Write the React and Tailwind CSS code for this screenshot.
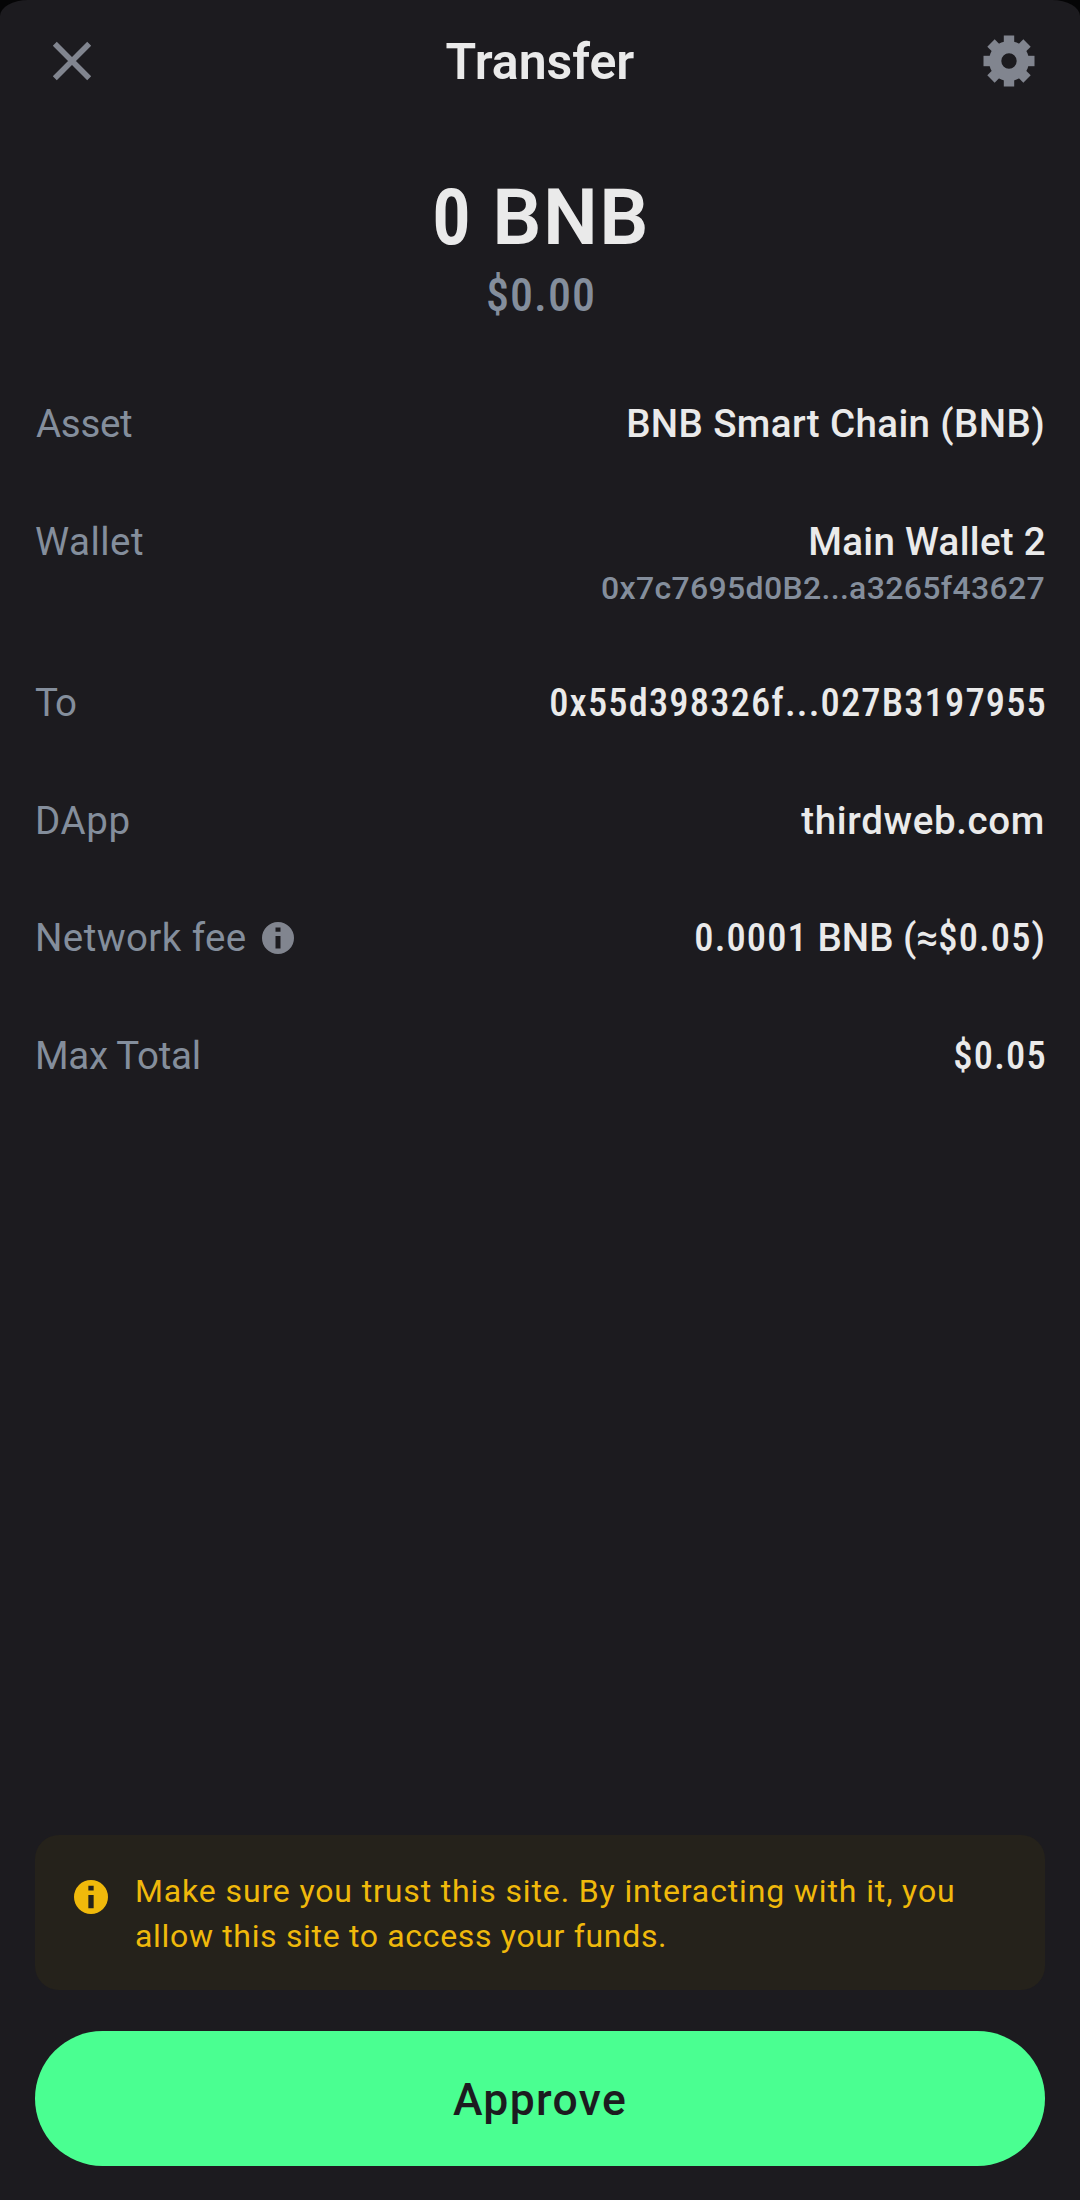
function CloseIcon() {
    return (
        <svg width="40" height="40" viewBox="0 0 40 40" fill="none" stroke="#81858f" strokeWidth="5.6">
            <path d="M2.8 2.8L37.2 37.2M37.2 2.8L2.8 37.2" />
        </svg>
    );
}

function GearIcon() {
    return (
        <svg width="52" height="52" viewBox="-26 -26 52 52" fill="#81858f">
            <path
                fillRule="evenodd"
                d="M0 -20A20 20 0 1 1 0 20A20 20 0 1 1 0 -20ZM0 -7.7A7.7 7.7 0 1 0 0 7.7A7.7 7.7 0 1 0 0 -7.7Z"
            />
            {[0, 45, 90, 135, 180, 225, 270, 315].map((deg) => (
                <rect key={deg} x="-5.2" y="-25.5" width="10.4" height="9" transform={`rotate(${deg})`} />
            ))}
        </svg>
    );
}

function InfoIcon({ className }) {
    return (
        <svg className={className} viewBox="0 0 32 32" fill="currentColor">
            <path
                fillRule="evenodd"
                d="M16 0A16 16 0 1 1 16 32A16 16 0 1 1 16 0ZM13.5 5.5V9.8H18.5V5.5ZM13.5 14V26.5H18.5V14Z"
            />
        </svg>
    );
}

// Narrow figures for amounts and addresses
function Num({ children, className = 'tracking-[1.1px]' }) {
    return <span className={`[font-stretch:75%] ${className}`}>{children}</span>;
}

function Row({ label, children }) {
    return (
        <div className="flex items-start justify-between text-[38.5px] leading-[46px]">
            <div className="flex items-center text-[#848e9c]">{label}</div>
            <div className="text-right font-medium text-[#eaeaea]">{children}</div>
        </div>
    );
}

export default function App() {
    return (
        <div className="w-[1080px] h-[2200px] bg-[#050506] font-['Roboto',sans-serif]">
            <div className="w-full h-full flex flex-col bg-[#1c1b1f] rounded-t-[28px_16px] px-[35px] pb-[34px] whitespace-nowrap">
                {/* Header */}
                <header className="h-[122px] shrink-0 flex items-center justify-between pl-[17px] pr-[10px]">
                    <button aria-label="Close" className="w-[52px]">
                        <CloseIcon />
                    </button>
                    <h1 className="text-[50px] leading-[58px] font-semibold text-[#eaeaea] pt-[2px] pr-[7px]">Transfer</h1>
                    <button aria-label="Settings">
                        <GearIcon />
                    </button>
                </header>

                {/* Amount */}
                <div className="mt-[50px] text-center">
                    <div className="text-[77.5px] leading-[91px] font-semibold text-[#eaeaea] pl-[2px]">
                        <Num className="mr-[2px]">0</Num> <span className="tracking-[1.5px]">BNB</span>
                    </div>
                    <div className="text-[46px] leading-[65px] font-medium text-[#848e9c] pl-[2px]">
                        <Num className="tracking-[1px]">$0.00</Num>
                    </div>
                </div>

                {/* Details */}
                <div className="mt-[73px] flex flex-col gap-[71.5px]">
                    <Row label={<span className="pl-px tracking-[-0.3px]">Asset</span>}>
                        <span className="tracking-[0.38px]">BNB Smart Chain (BNB)</span>
                    </Row>
                    <Row label={<span className="tracking-[0.48px]">Wallet</span>}>
                        <div className="tracking-[0.3px] mr-[-1px]">Main Wallet 2</div>
                        <div className="mt-1 mb-0.5 text-[32px] leading-[38px] tracking-[0.33px] text-[#848e9c]">
                            0x7c7695d0B2...a3265f43627
                        </div>
                    </Row>
                    <Row label={<span className="tracking-[-1px]">To</span>}>
                        <Num className="tracking-[1.15px] mr-[-2px]">0x55d398326f...027B3197955</Num>
                    </Row>
                    <Row label={<span className="tracking-[0.6px]">DApp</span>}>
                        <span className="tracking-[0.64px]">thirdweb.com</span>
                    </Row>
                    <Row
                        label={
                            <>
                                <span className="tracking-[0.4px]">Network fee</span>
                                <InfoIcon className="size-8 ml-[15px] text-[#81858f]" />
                            </>
                        }
                    >
                        <Num>0.0001</Num> BNB (≈<Num>$0.05</Num>)
                    </Row>
                    <Row label={<span className="tracking-[-0.3px]">Max Total</span>}>
                        <Num className="tracking-[1.2px] mr-[-2px]">$0.05</Num>
                    </Row>
                </div>

                {/* Warning */}
                <div className="mt-auto h-[155px] flex items-start rounded-3xl bg-[#25221b] pl-[39px] pt-[34px] text-[#f0b90b]">
                    <InfoIcon className="size-[34px] mt-[11px] shrink-0" />
                    <p className="ml-[27px] text-[32px] leading-[44.7px] tracking-[0.87px]">
                        Make sure you trust this site. By interacting with it, you
                        <br />
                        <span className="tracking-[0.67px]">allow this site to access your funds.</span>
                    </p>
                </div>

                <button className="mt-[41px] h-[135px] shrink-0 rounded-full bg-[#4aff91] pt-1 text-[44.5px] font-medium tracking-[1.33px] text-[#1c1b1f]">
                    Approve
                </button>
            </div>
        </div>
    );
}
